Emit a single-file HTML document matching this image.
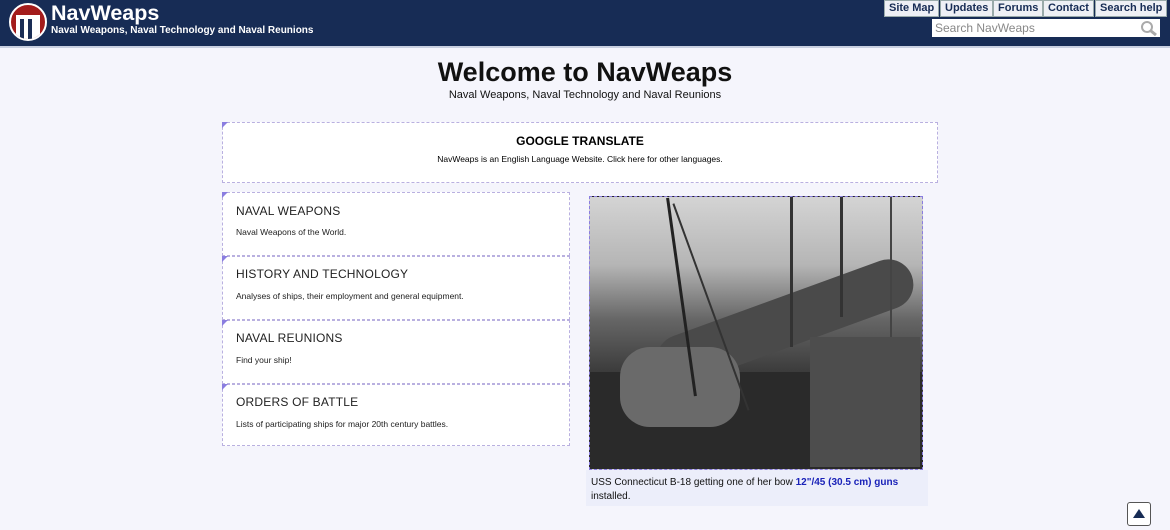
<!DOCTYPE html>
<html><head><meta charset="utf-8"><style>
body{margin:0;width:1170px;height:528px;background:#f5f5fc;font-family:"Liberation Sans",sans-serif;position:relative;overflow:hidden}
.hdr{position:absolute;left:0;top:0;width:1170px;height:46px;background:#172c55;border-bottom:2px solid #c8cfe0}
.logo{position:absolute;left:9px;top:3px;width:34px;height:34px;border-radius:50%;background:#a31c1c;border:2px solid #fff;overflow:hidden}
.t1{position:absolute;left:51px;top:1px;color:#fff;font-weight:bold;font-size:21.5px}
.t2{position:absolute;left:51px;top:25px;color:#fff;font-weight:bold;font-size:10px}
.nav{position:absolute;top:0;font-size:11px;font-weight:bold;color:#172c55;background:#eef0f5;height:15px;line-height:15px;padding:0 4px;border:1px solid #9aa}
.srch{position:absolute;left:932px;top:19px;width:228px;height:18px;background:#fff;font-size:12px;color:#888;line-height:18px;padding-left:3px;box-sizing:border-box}
.box{position:absolute;background:#fff;border:1px dashed #b9b0e0;box-sizing:border-box}
.h{font-size:12px;color:#222;position:absolute;left:13px;letter-spacing:.2px}
.d{font-size:8.5px;color:#222;position:absolute;left:13px}
.tri{position:absolute;width:0;height:0;border-left:6px solid #8a7de0;border-bottom:6px solid transparent}
</style></head><body>
<div class="hdr">
<div class="logo"><div style="position:absolute;left:5px;top:10px;width:24px;height:24px;background:#fff"></div><div style="position:absolute;left:9px;top:14px;width:4px;height:20px;background:#1a2d55"></div><div style="position:absolute;left:17px;top:14px;width:4px;height:20px;background:#1a2d55"></div></div>
<div class="t1">NavWeaps</div>
<div class="t2">Naval Weapons, Naval Technology and Naval Reunions</div>
<div class="nav" style="left:884px">Site Map</div>
<div class="nav" style="left:940px">Updates</div>
<div class="nav" style="left:993px">Forums</div>
<div class="nav" style="left:1043px">Contact</div>
<div class="nav" style="left:1095px">Search help</div>
<div class="srch">Search NavWeaps
<svg style="position:absolute;right:3px;top:1px" width="17" height="16"><circle cx="7" cy="7" r="5" fill="none" stroke="#aaa" stroke-width="2"/><line x1="11" y1="11" x2="16" y2="15" stroke="#aaa" stroke-width="3"/></svg></div>
</div>
<div style="position:absolute;left:0;width:1170px;top:57px;text-align:center;font-size:27px;font-weight:bold;color:#111">Welcome to NavWeaps</div>
<div style="position:absolute;left:0;width:1170px;top:89px;text-align:center;font-size:11px;color:#111">Naval Weapons, Naval Technology and Naval Reunions</div>
<div class="box" style="left:222px;top:122px;width:716px;height:61px">
<div style="position:absolute;top:11px;width:100%;text-align:center;font-weight:bold;font-size:12px">GOOGLE TRANSLATE</div>
<div style="position:absolute;top:31px;width:100%;text-align:center;font-size:8.5px">NavWeaps is an English Language Website. Click here for other languages.</div></div>
<div class="tri" style="left:222px;top:122px"></div>
<div class="box" style="left:222px;top:192px;width:348px;height:64px"><div class="h" style="top:11px">NAVAL WEAPONS</div><div class="d" style="top:34px">Naval Weapons of the World.</div></div>
<div class="box" style="left:222px;top:256px;width:348px;height:64px"><div class="h" style="top:10px">HISTORY AND TECHNOLOGY</div><div class="d" style="top:34px">Analyses of ships, their employment and general equipment.</div></div>
<div class="box" style="left:222px;top:320px;width:348px;height:64px"><div class="h" style="top:10px">NAVAL REUNIONS</div><div class="d" style="top:34px">Find your ship!</div></div>
<div class="box" style="left:222px;top:384px;width:348px;height:62px"><div class="h" style="top:10px">ORDERS OF BATTLE</div><div class="d" style="top:34px">Lists of participating ships for major 20th century battles.</div></div>
<div class="tri" style="left:222px;top:192px"></div><div class="tri" style="left:222px;top:256px"></div><div class="tri" style="left:222px;top:320px"></div><div class="tri" style="left:222px;top:384px"></div>
<div style="position:absolute;left:586px;top:470px;width:342px;height:36px;background:#eceefa"></div>
<div style="position:absolute;left:589px;top:196px;width:334px;height:274px;border:1px dashed #8a7de0;box-sizing:border-box;background:linear-gradient(180deg,#d4d4d4 0%,#b5b5b5 25%,#666 45%,#3a3a3a 65%,#262626 100%);overflow:hidden">
<div style="position:absolute;left:60px;top:100px;width:270px;height:50px;background:#4a4a4a;transform:rotate(-20deg);border-radius:25px"></div>
<div style="position:absolute;left:0;top:175px;width:334px;height:100px;background:#2a2a2a"></div>
<div style="position:absolute;left:30px;top:150px;width:120px;height:80px;background:#6a6a6a;border-radius:30px"></div>
<div style="position:absolute;left:220px;top:140px;width:110px;height:130px;background:#4d4d4d"></div>
<div style="position:absolute;left:90px;top:0;width:3px;height:200px;background:#222;transform:rotate(-8deg)"></div>
<div style="position:absolute;left:120px;top:0;width:2px;height:220px;background:#333;transform:rotate(-20deg)"></div>
<div style="position:absolute;left:200px;top:0;width:3px;height:150px;background:#333"></div>
<div style="position:absolute;left:250px;top:0;width:3px;height:120px;background:#333"></div>
<div style="position:absolute;left:300px;top:0;width:2px;height:140px;background:#444"></div>
</div>
<div style="position:absolute;left:591px;top:476px;font-size:10px;color:#111;line-height:14px;width:330px">USS Connecticut B-18 getting one of her bow <b style="color:#1a22b8">12"/45 (30.5 cm) guns</b> installed.</div>
<div style="position:absolute;left:1127px;top:502px;width:22px;height:22px;border:1px solid #555;border-radius:3px;background:#fff"><svg width="22" height="22"><polygon points="5,15 17,15 11,6" fill="#172c55"/></svg></div>
</body></html>
